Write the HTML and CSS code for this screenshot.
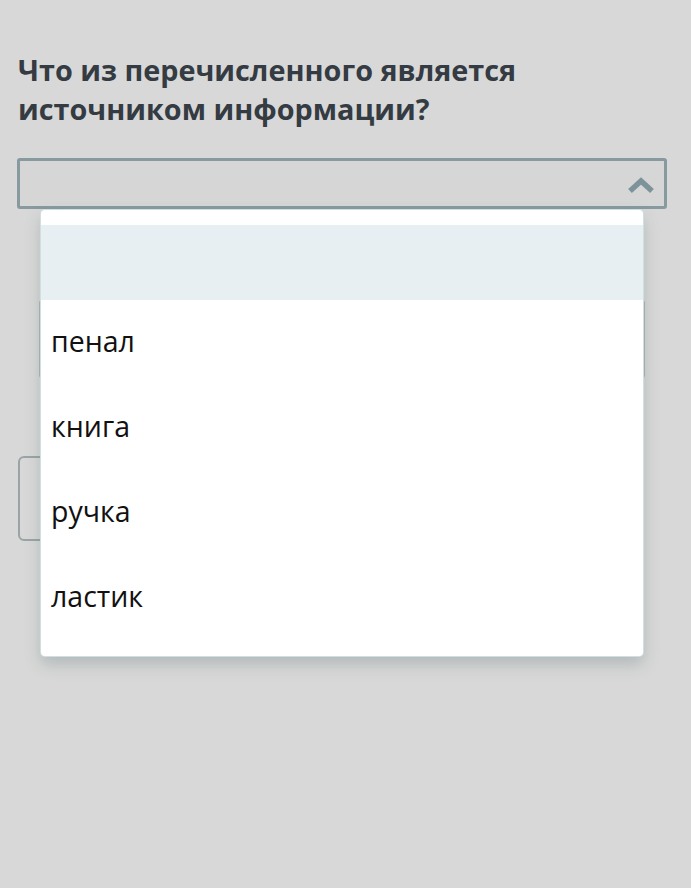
FILE: index.html
```html
<!DOCTYPE html>
<html lang="ru">
<head>
  <meta charset="UTF-8">
  <meta name="viewport" content="width=device-width, initial-scale=1.0">
  <title>Вопрос</title>
  <link rel="stylesheet" href="styles.css">
</head>
<body>
  <div class="question">
    <h1 class="question-title">Что из перечисленного является источником информации?</h1>

    <div class="select-wrap">
      <div class="select">
        <svg class="chevron" width="28" height="18" viewBox="0 0 28 18">
          <path d="M3 15 L14 5 L25 15" fill="none" stroke="#7c9499" stroke-width="5.5"/>
        </svg>
      </div>

      <ul class="dropdown">
        <li class="option option-empty"></li>
        <li class="option">пенал</li>
        <li class="option">книга</li>
        <li class="option">ручка</li>
        <li class="option">ластик</li>
      </ul>
    </div>

    <div class="answer-box"></div>
    <div class="submit-box"></div>
  </div>
</body>
</html>
```

FILE: styles.css
```css
html, body {
  min-height: 100%;
}
body {
  margin: 0;
  min-height: 888px;
  background-color: #d8d8d8;
  font-family: 'Open Sans', 'Noto Sans', sans-serif;
}
.question {
  padding: 50px 24px 250px 17px;
}
.question-title {
  margin: 0 0 30px 1px;
  font-size: 28.8px;
  line-height: 39px;
  font-weight: 700;
  color: #343b42;
}
.select-wrap {
  position: relative;
}
.select {
  height: 45px;
  border: 3px solid #869a9f;
  border-radius: 3px;
  background-color: #d6d6d6;
  display: flex;
  align-items: center;
  justify-content: flex-end;
  padding-right: 9px;
}
.chevron {
  margin-top: 2px;
}
.dropdown {
  position: absolute;
  top: 52px;
  left: 24px;
  width: 602px;
  margin: 0;
  padding: 15px 0 16px;
  list-style: none;
  background-color: #fff;
  border-radius: 4px;
  box-shadow: 0 0 0 1px #cfe0e0, 0 8px 16px rgba(90, 110, 110, 0.3);
  z-index: 2;
}
.option {
  height: 85px;
  display: flex;
  align-items: center;
  padding-left: 10px;
  padding-bottom: 3px;
  box-sizing: border-box;
  font-size: 28.5px;
  color: #111;
}
.option-empty {
  height: 75px;
  background-color: #e8eff2;
}
.answer-box {
  margin: 91px 22px 0 22px;
  height: 74px;
  border: 2px solid #aeb5b5;
  border-radius: 3px;
}
.submit-box {
  margin: 78px 0 0 1px;
  width: 300px;
  height: 81px;
  border: 2px solid #9aa4a6;
  border-radius: 6px;
}
```
